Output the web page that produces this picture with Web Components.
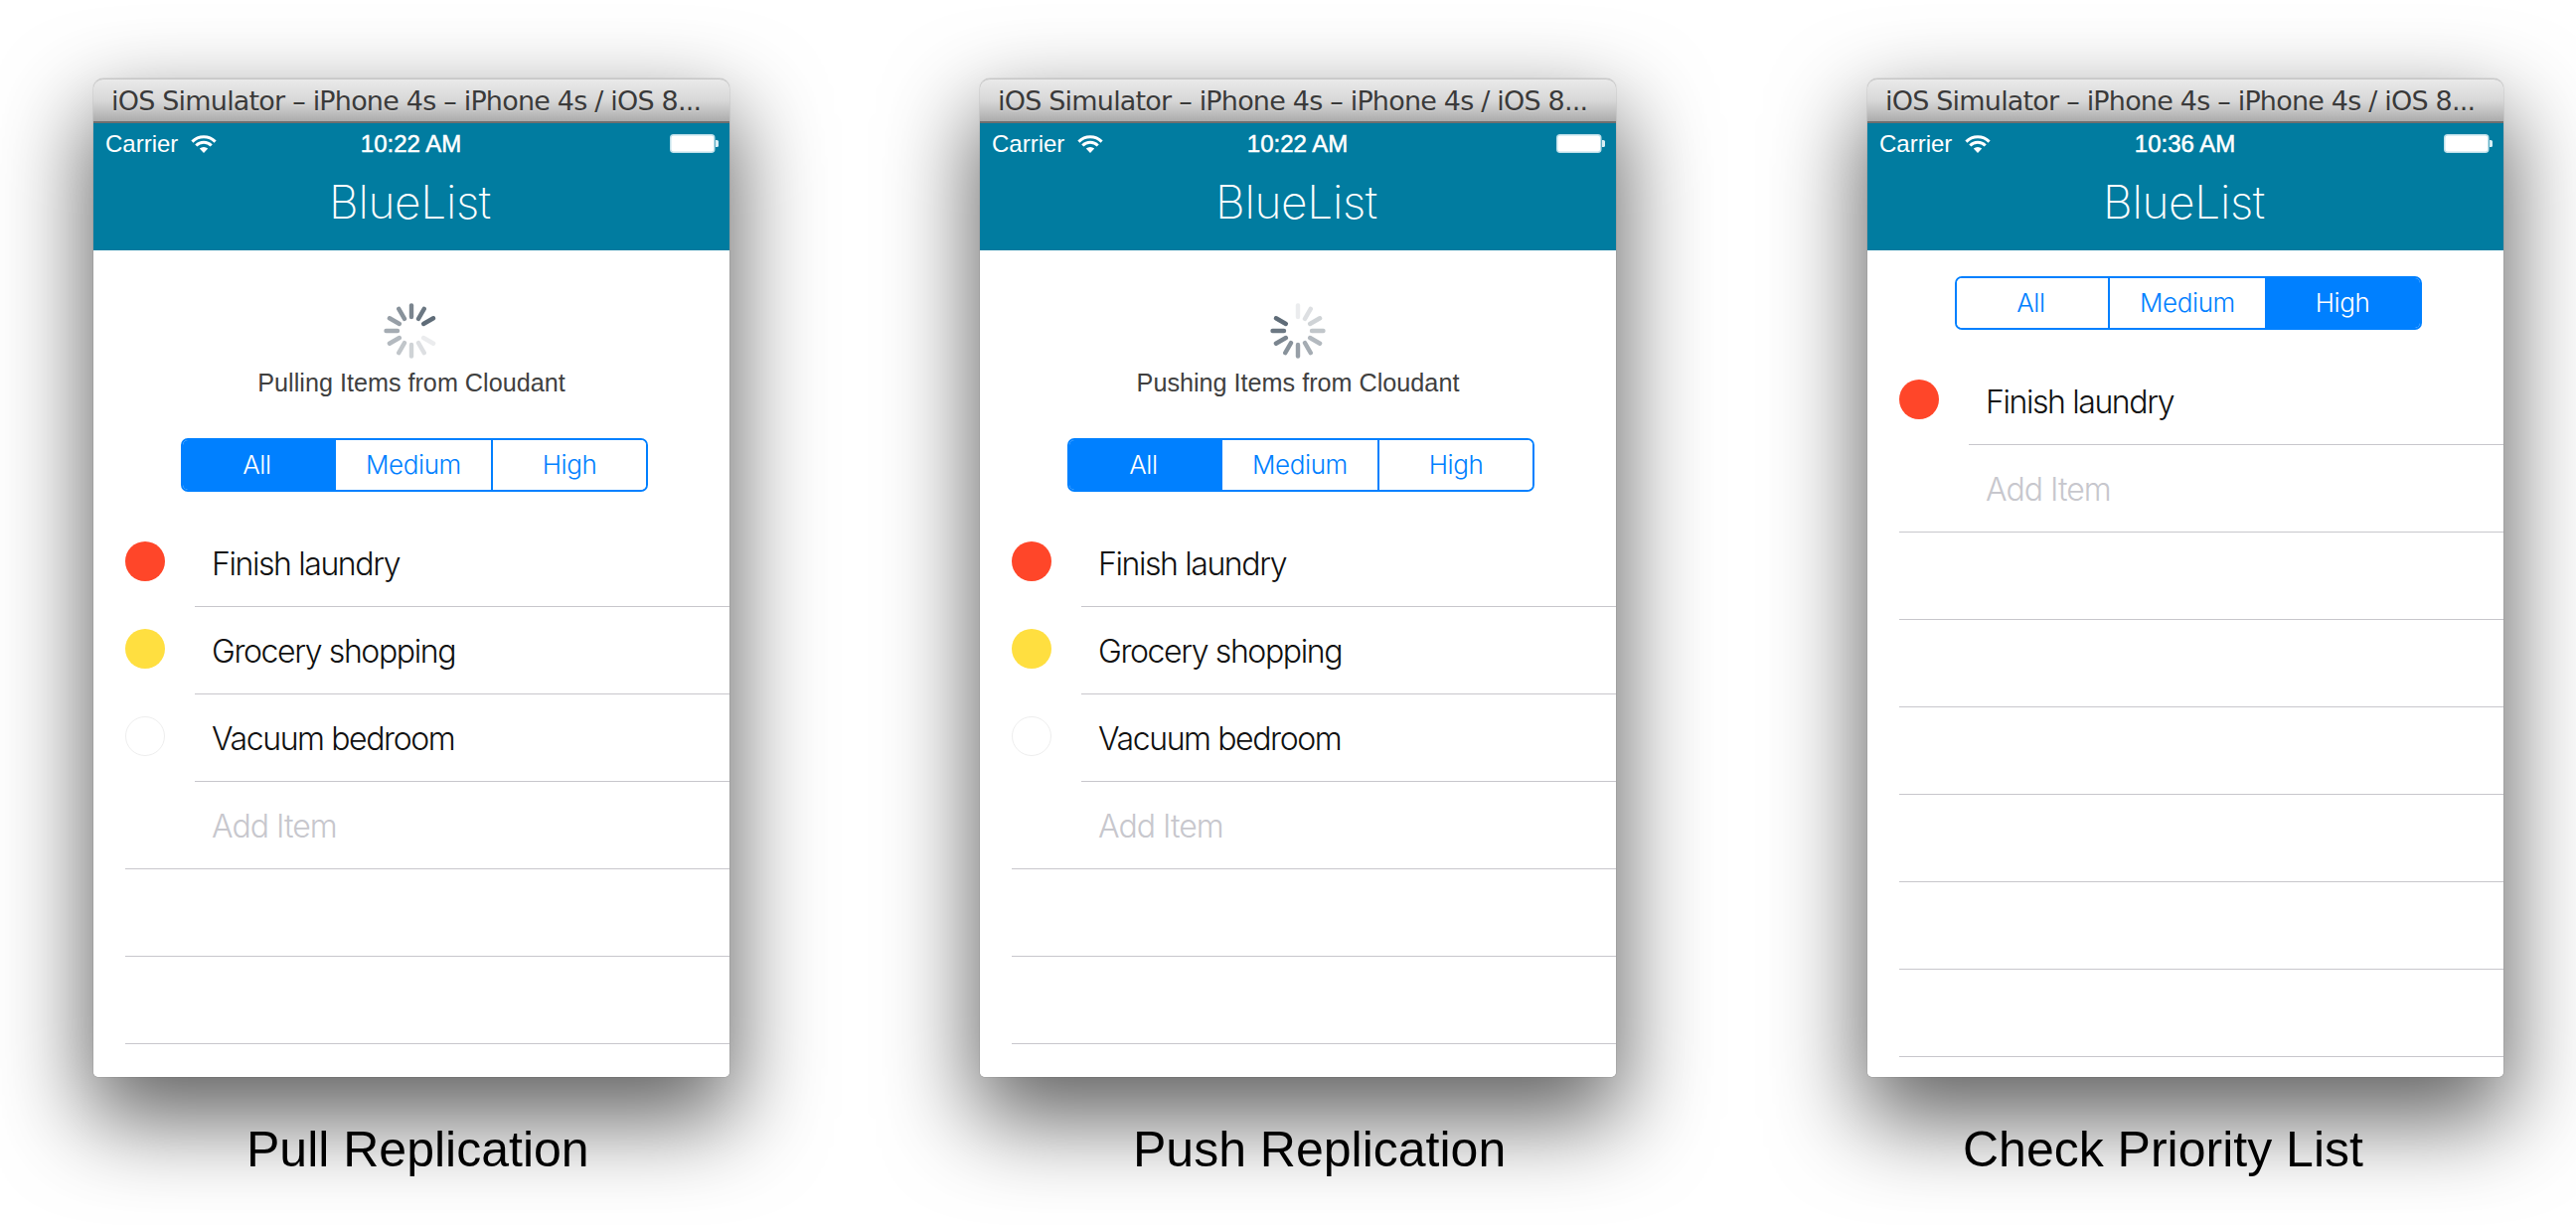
<!doctype html>
<html>
<head>
<meta charset="utf-8">
<title>BlueList replication</title>
<style>
  html, body { margin: 0; background: #fff; overflow: hidden; }
  body { font-family: "Liberation Sans", Arial, sans-serif; }
</style>
</head>
<body>

<template id="gallery-template">
  <style>
    :host { display: flex; gap: 252px; padding: 79px 0 0 94px; height: 1154px; }
    ::slotted(:last-child) { margin-left: 1px; }
  </style>
  <slot></slot>
</template>

<template id="window-template">
  <style>
    :host { display: block; width: 640px; }
    .frame {
      border-radius: 10px 10px 5px 5px;
      box-shadow: 0 38px 90px 5px rgba(0,0,0,.62), 0 0 1px rgba(0,0,0,.6);
    }
    .title {
      box-sizing: border-box; height: 45px; padding: 6px 0 0 18px;
      border-radius: 10px 10px 0 0;
      border-top: 1px solid #c6c6c6;
      border-bottom: 2px solid #6f6f6f;
      background: linear-gradient(#eaeaea, #d8d8d8 50%, #acacac);
      font: 27px/32px "DejaVu Sans", sans-serif;
      letter-spacing: -.8px;
      color: #3a3a3a; white-space: nowrap;
      text-shadow: 0 1px 0 rgba(255,255,255,.35);
    }
    .screen { height: 960px; background: #fff; overflow: hidden; border-radius: 0 0 5px 5px; }
    .caption {
      margin-top: 43px;
      font: 50px/60px "Liberation Sans", Arial, sans-serif;
      color: #000; white-space: nowrap;
      padding-left: var(--caption-left, 0);
    }
  </style>
  <div class="frame">
    <div class="title"><slot name="title"></slot></div>
    <div class="screen"><slot></slot></div>
  </div>
  <div class="caption"><slot name="caption"></slot></div>
</template>

<template id="nav-template">
  <style>
    :host { display: block; height: 128px; background: #017ca0; color: #fff; }
    .status { display: grid; grid-template-columns: 1fr auto 1fr; align-items: center; height: 40px; box-sizing: border-box; padding: 1px 10px 0 9px; }
    .left { display: flex; align-items: center; padding-left: 3px; }
    .right { display: flex; justify-content: flex-end; }
    .carrier { font: 24px/28px "Liberation Sans", Arial, sans-serif; }
    svg.wifi { margin-left: 13px; }
    .time { font: 24px/28px "Liberation Sans", Arial, sans-serif; -webkit-text-stroke: .5px #fff; }
    .bar { text-align: center; font: 200 46px/56px Inter, sans-serif; letter-spacing: -.3px; padding: 11px 3px 0 0; }
  </style>
  <div class="status">
    <div class="left">
      <span class="carrier">Carrier</span>
      <svg class="wifi" width="26" height="20" viewBox="0 0 26 20">
        <path d="M1.4 7.6a16.4 16.4 0 0 1 23.2 0M5.3 11.5a10.9 10.9 0 0 1 15.4 0" fill="none" stroke="#fff" stroke-width="3"/>
        <path d="M8.8 14.6a6 6 0 0 1 8.4 0L13 19z" fill="#fff"/>
      </svg>
    </div>
    <span class="time"><slot name="time"></slot></span>
    <div class="right">
      <svg width="50" height="20" viewBox="0 0 50 20">
        <rect x=".75" y=".75" width="44" height="17.5" rx="3" fill="#fff" stroke="#bfe0ea" stroke-width="1.5"/>
        <rect x="3" y="3" width="39.5" height="13" rx="1" fill="#fff"/>
        <path d="M46 6h1.5a1.5 1.5 0 0 1 1.5 1.5v4a1.5 1.5 0 0 1-1.5 1.5H46z" fill="#d8eef4"/>
      </svg>
    </div>
  </div>
  <div class="bar"><slot></slot></div>
</template>

<template id="progress-template">
  <style>
    :host { display: flex; flex-direction: column; align-items: center; height: 189px; box-sizing: border-box; padding-top: 52px; color: #404040; }
    svg { display: block; }
    .label { margin-top: 6px; font: 25.2px/34px "Liberation Sans", Arial, sans-serif; white-space: nowrap; }
  </style>
  <svg width="58" height="58" viewBox="-29 -29 58 58"></svg>
  <div class="label"><slot></slot></div>
</template>

<template id="segments-template">
  <style>
    :host { display: flex; box-sizing: border-box; width: 470px; height: 54px; margin-left: 88px; border: 2px solid #0080ff; border-radius: 7px; overflow: hidden; }
    ::slotted(:nth-child(1)) { flex: 0 0 152px; }
    ::slotted(:nth-child(2)) { flex: 0 0 158px; }
    ::slotted(:nth-child(3)) { flex: 1; }
  </style>
  <slot></slot>
</template>

<template id="segment-template">
  <style>
    :host { display: flex; box-sizing: border-box; align-items: center; justify-content: center; font: 300 26px/32px Inter, sans-serif; letter-spacing: -.4px; color: #0080ff; background: #fff; border-left: 2px solid #0080ff; }
    :host(:first-child) { border-left: 0; padding-right: 3px; }
    :host([active]) { background: #0080ff; color: #fff; border-left: 0; }
  </style>
  <slot></slot>
</template>

<template id="list-template">
  <style>
    :host { display: block; margin-top: 28px; }
  </style>
  <slot></slot>
</template>

<template id="row-template">
  <style>
    :host { display: flex; height: 88px; padding-left: 32px; --dot: transparent; }
    :host([color="red"]) { --dot: #ff4629; }
    :host([color="yellow"]) { --dot: #ffdf40; }
    :host([color="white"]) { --dot: #ffffff; }
    .dot { flex: none; box-sizing: border-box; width: 40px; height: 40px; margin: 22px 30px 0 0; border-radius: 50%; background: var(--dot); }
    :host([color="white"]) .dot { border: 1.5px solid #eeeeee; }
    .main { flex: 1; box-sizing: border-box; border-bottom: 1px solid #c8c7cc; padding: 25px 0 0 17px; font: 300 32px/40px Inter, sans-serif; letter-spacing: -1.4px; color: #111; }
    :host(:not([color])) .dot { display: none; }
    :host(:not([color])) .main { padding-left: 87px; color: #c7c7cd; letter-spacing: -1px; }
  </style>
  <div class="dot"></div>
  <div class="main"><slot></slot></div>
</template>

<script>
  function stamp(el, id) {
    var shadowRoot = el.attachShadow({mode: 'open'});
    shadowRoot.appendChild(document.querySelector(id).content.cloneNode(true));
    return shadowRoot;
  }

  customElements.define('bl-gallery', class extends HTMLElement {
    constructor() { super(); stamp(this, '#gallery-template'); }
  });
  customElements.define('bl-window', class extends HTMLElement {
    constructor() { super(); stamp(this, '#window-template'); }
  });
  customElements.define('bl-nav', class extends HTMLElement {
    constructor() { super(); stamp(this, '#nav-template'); }
  });
  customElements.define('bl-segments', class extends HTMLElement {
    constructor() { super(); stamp(this, '#segments-template'); }
  });
  customElements.define('bl-segment', class extends HTMLElement {
    constructor() { super(); stamp(this, '#segment-template'); }
  });
  customElements.define('bl-list', class extends HTMLElement {
    constructor() { super(); stamp(this, '#list-template'); }
  });
  customElements.define('bl-row', class extends HTMLElement {
    constructor() { super(); stamp(this, '#row-template'); }
  });

  customElements.define('bl-progress', class extends HTMLElement {
    constructor() { super(); stamp(this, '#progress-template'); }
    connectedCallback() {
      // head = clock position of the darkest tick, the ones behind it fade out
      var head = Number(this.getAttribute('head'));
      var ticks = '';
      for (var i = 0; i < 12; i++) {
        var age = (head - i + 12) % 12;
        var opacity = age == 11 ? 0 : 1 - age * .088;
        var a = i * Math.PI / 6;
        var sx = Math.sin(a), cy = -Math.cos(a);
        ticks += '<line x1="' + (sx * 14) + '" y1="' + (cy * 14) + '" x2="' + (sx * 25.5) + '" y2="' + (cy * 25.5) +
          '" stroke="#5f6c78" stroke-width="4.4" stroke-linecap="round" opacity="' + opacity + '"/>';
      }
      this.shadowRoot.querySelector('svg').innerHTML = ticks;
    }
  });
</script>

<bl-gallery>
  <bl-window style="--caption-left:154px">
    <span slot="title">iOS Simulator – iPhone 4s – iPhone 4s / iOS 8...</span>
    <bl-nav><span slot="time">10:22 AM</span>BlueList</bl-nav>
    <bl-progress head="2">Pulling Items from Cloudant</bl-progress>
    <bl-segments><bl-segment active>All</bl-segment><bl-segment>Medium</bl-segment><bl-segment>High</bl-segment></bl-segments>
    <bl-list>
      <bl-row color="red">Finish laundry</bl-row>
      <bl-row color="yellow">Grocery shopping</bl-row>
      <bl-row color="white">Vacuum bedroom</bl-row>
      <bl-row>Add Item</bl-row>
      <bl-row></bl-row>
      <bl-row></bl-row>
    </bl-list>
    <span slot="caption">Pull Replication</span>
  </bl-window>

  <bl-window style="--caption-left:154px">
    <span slot="title">iOS Simulator – iPhone 4s – iPhone 4s / iOS 8...</span>
    <bl-nav><span slot="time">10:22 AM</span>BlueList</bl-nav>
    <bl-progress head="10">Pushing Items from Cloudant</bl-progress>
    <bl-segments><bl-segment active>All</bl-segment><bl-segment>Medium</bl-segment><bl-segment>High</bl-segment></bl-segments>
    <bl-list>
      <bl-row color="red">Finish laundry</bl-row>
      <bl-row color="yellow">Grocery shopping</bl-row>
      <bl-row color="white">Vacuum bedroom</bl-row>
      <bl-row>Add Item</bl-row>
      <bl-row></bl-row>
      <bl-row></bl-row>
    </bl-list>
    <span slot="caption">Push Replication</span>
  </bl-window>

  <bl-window style="--caption-left:96px">
    <span slot="title">iOS Simulator – iPhone 4s – iPhone 4s / iOS 8...</span>
    <bl-nav><span slot="time">10:36 AM</span>BlueList</bl-nav>
    <bl-segments style="margin-top:26px"><bl-segment>All</bl-segment><bl-segment>Medium</bl-segment><bl-segment active>High</bl-segment></bl-segments>
    <bl-list>
      <bl-row color="red">Finish laundry</bl-row>
      <bl-row>Add Item</bl-row>
      <bl-row></bl-row>
      <bl-row></bl-row>
      <bl-row></bl-row>
      <bl-row></bl-row>
      <bl-row></bl-row>
      <bl-row></bl-row>
    </bl-list>
    <span slot="caption">Check Priority List</span>
  </bl-window>
</bl-gallery>

</body>
</html>
